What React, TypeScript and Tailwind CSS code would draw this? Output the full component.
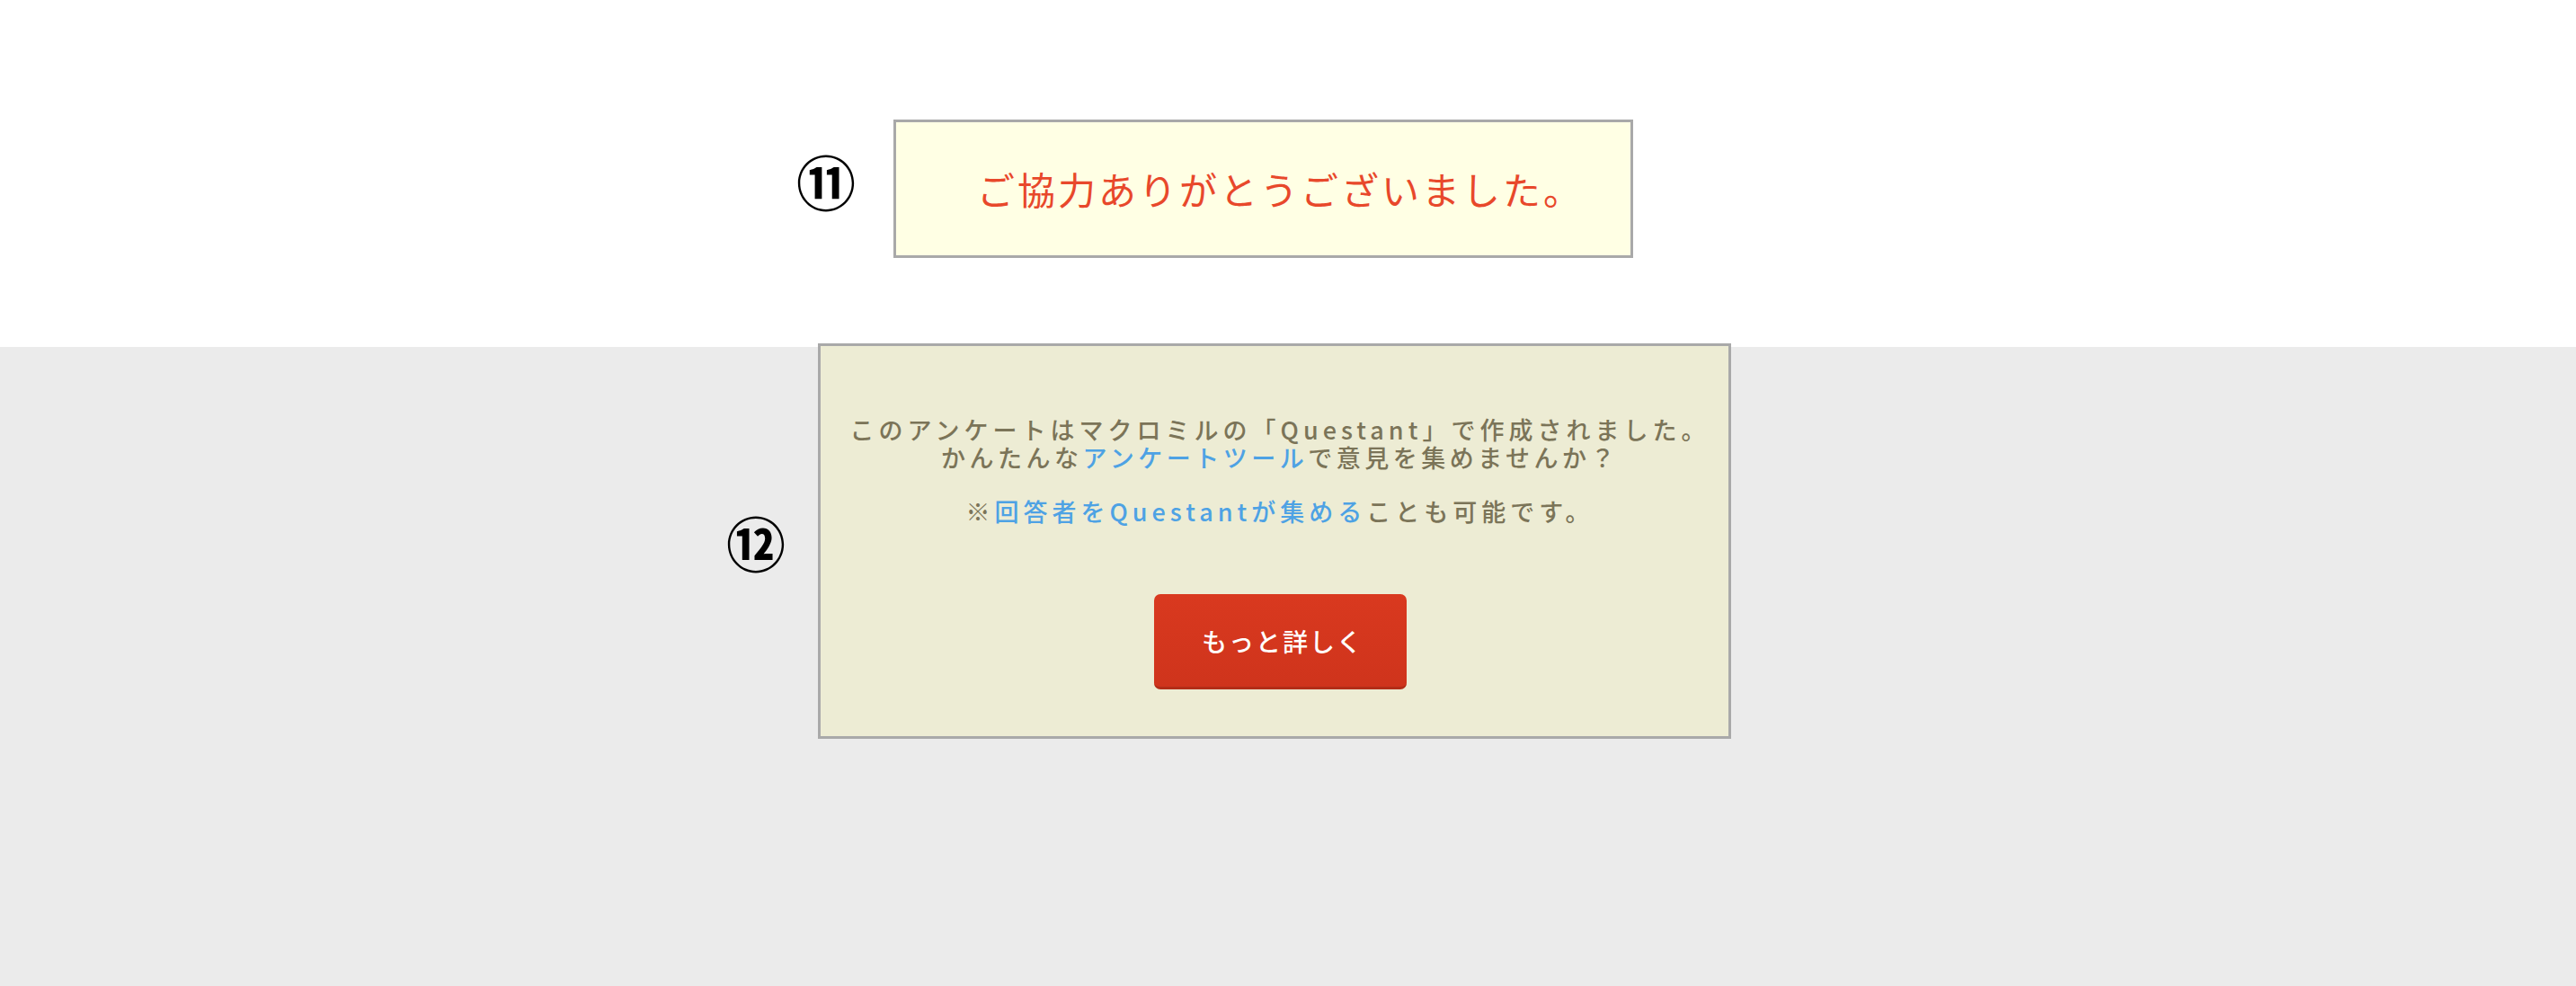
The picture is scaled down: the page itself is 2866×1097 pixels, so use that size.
const jp = "font-['Noto_Sans_CJK_JP','Noto_Sans',sans-serif]";

function Marker({ label }: { label: string }) {
  return (
    <div className="w-[66px] shrink-0 text-center text-[66px] leading-none font-bold text-black">
      {label}
    </div>
  );
}

export default function App() {
  return (
    <div className={`min-h-screen bg-[#ebebeb] ${jp}`}>
      <section className="flex h-[386px] items-start bg-white pl-[886px] pt-[133px]">
        <div className="mt-[34px]">
          <Marker label="⑪" />
        </div>
        <div className="ml-[42px] flex h-[154px] w-[823px] items-center justify-center border-[3px] border-[#a9a9a9] bg-[#ffffe4] pl-[38px]">
          <p className="text-[42px] leading-none tracking-[3px] text-[#e8482b]">
            ご協力ありがとうございました。
          </p>
        </div>
      </section>

      <section className="-mt-[4px] flex items-center pl-[808px]">
        <Marker label="⑫" />
        <div className="ml-[36px] flex h-[440px] w-[1016px] flex-col items-center border-[3px] border-[#a9a9a9] bg-[#edecd4] pl-[12px] pt-[77px]">
          <div className="text-center text-[27px] leading-[31px] font-medium tracking-[5px] text-[#7b7458]">
            <p>このアンケートはマクロミルの「Questant」で作成されました。</p>
            <p className="tracking-[4.5px]">
              かんたんな<span className="text-[#4ea2e4]">アンケートツール</span>で意見を集めませんか？
            </p>
            <p className="mt-[29px]">
              ※<span className="text-[#4ea2e4]">回答者をQuestantが集める</span>ことも可能です。
            </p>
          </div>
          <button className="mt-[77px] flex h-[106px] w-[281px] items-center justify-center rounded-[7px] border-b-[3px] border-[#b32d17] bg-gradient-to-b from-[#d9391f] to-[#cf341c] pl-[6px] text-[28px] font-medium tracking-[2px] text-white">
            もっと詳しく
          </button>
        </div>
      </section>
    </div>
  );
}
